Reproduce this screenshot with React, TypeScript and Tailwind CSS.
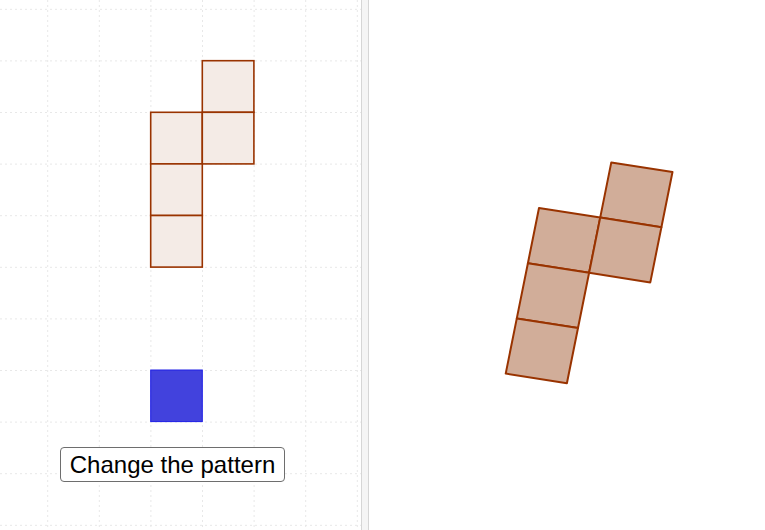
import React from "react";

type Cell = [number, number];

// net of the cube, in grid cells (col, row), row grows downward
const NET: Cell[] = [
  [1, -1],
  [0, 0],
  [1, 0],
  [0, 1],
  [0, 2],
];

const STEP = 51.6;
const GRID_X0 = 47.7;
const GRID_Y0 = 9.3;

function GridLines() {
  const xs: number[] = [];
  const ys: number[] = [];
  for (let x = GRID_X0; x < 361; x += STEP) xs.push(x);
  for (let y = GRID_Y0; y < 530; y += STEP) ys.push(y);
  return (
    <g stroke="#e8e8e8" strokeWidth={1} strokeDasharray="2 3">
      {xs.map((x) => (
        <line key={"x" + x} x1={x} y1={0} x2={x} y2={530} />
      ))}
      {ys.map((y) => (
        <line key={"y" + y} x1={0} y1={y} x2={361} y2={y} />
      ))}
    </g>
  );
}

function FlatNet() {
  const ox = 150.7;
  const oy = 112.3;
  return (
    <g fill="#f4ebe6" stroke="#993300" strokeWidth={1.6}>
      {NET.map(([c, r]) => (
        <rect key={`${c},${r}`} x={ox + c * STEP} y={oy + r * STEP} width={STEP} height={STEP} />
      ))}
    </g>
  );
}

function TiltedNet() {
  const o = [539, 208];
  const u = [61.2, 9.6];
  const v = [-11.1, 55.2];
  const pt = (a: number, b: number) =>
    `${(o[0] + a * u[0] + b * v[0]).toFixed(1)},${(o[1] + a * u[1] + b * v[1]).toFixed(1)}`;
  return (
    <g fill="#d1ad99" stroke="#993300" strokeWidth={2} strokeLinejoin="round">
      {NET.map(([c, r]) => (
        <polygon key={`${c},${r}`} points={[pt(c, r), pt(c + 1, r), pt(c + 1, r + 1), pt(c, r + 1)].join(" ")} />
      ))}
    </g>
  );
}

export default function App() {
  return (
    <div className="flex h-[530px] w-[765px] overflow-hidden bg-white">
      <div className="relative h-full w-[361px] shrink-0">
        <svg width={361} height={530} className="block">
          <GridLines />
          <FlatNet />
          <rect x={150.7} y={370} width={STEP} height={STEP} fill="#4242dd" stroke="#1f1fe6" strokeWidth={1} />
        </svg>
        <button className="absolute left-[60px] top-[447px] flex h-[35px] w-[225px] items-center justify-center rounded-[4px] border border-[#6e6e6e] bg-white font-['Liberation_Sans',Arial,sans-serif] text-[24px] leading-none text-black">
          Change the pattern
        </button>
      </div>
      <div className="h-full w-[8px] shrink-0 border-x border-[#d6d6d6] bg-[#f5f5f5]" />
      <div className="relative h-full flex-1">
        <svg width={396} height={530} viewBox="369 0 396 530" className="block">
          <TiltedNet />
        </svg>
      </div>
    </div>
  );
}
